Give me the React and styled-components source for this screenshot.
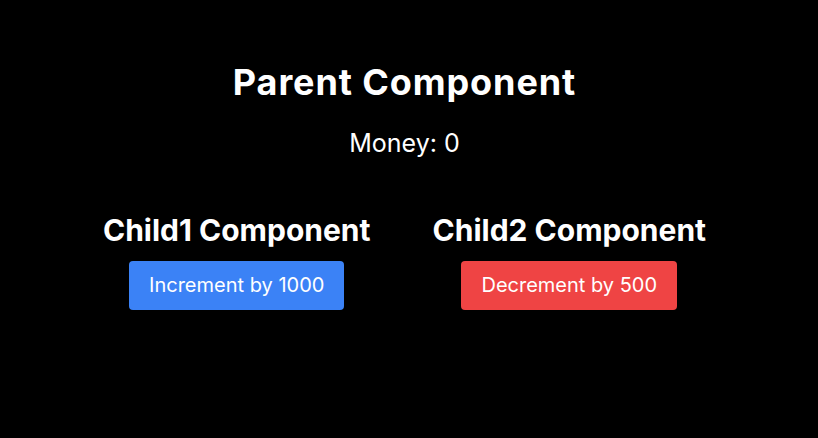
import styled, { createGlobalStyle } from "styled-components";

const GlobalStyle = createGlobalStyle`
  body {
    margin: 0;
    background: #000;
    color: #fff;
    font-family: Inter, "Noto Sans", sans-serif;
  }
`;

const Page = styled.div`
  min-height: 438px;
  padding: 60px 9px 0 0;
  display: flex;
  flex-direction: column;
  align-items: center;
  box-sizing: border-box;
`;

const Title = styled.h1`
  margin: 0;
  font-size: 36px;
  line-height: 44px;
  font-weight: 700;
  letter-spacing: 0.9px;
`;

const Money = styled.p`
  margin: 23px 0 0;
  font-size: 25px;
  line-height: 32px;
`;

const Children = styled.div`
  display: flex;
  gap: 62px;
  margin-top: 53px;
`;

const Child = styled.div`
  display: flex;
  flex-direction: column;
  align-items: center;
`;

const ChildTitle = styled.h2`
  margin: 0;
  font-size: 30px;
  line-height: 36px;
  font-weight: 700;
`;

const Button = styled.button`
  margin-top: 13px;
  border: none;
  border-radius: 4px;
  padding: 10px 20px;
  font-family: inherit;
  font-size: 20px;
  line-height: 29px;
  color: #fff;
  cursor: pointer;
  background: ${({ variant }) => (variant === "red" ? "#ef4444" : "#3b82f6")};
`;

export default function App() {
  return (
    <>
      <GlobalStyle />
      <Page>
        <Title>Parent Component</Title>
        <Money>Money: 0</Money>
        <Children>
          <Child>
            <ChildTitle>Child1 Component</ChildTitle>
            <Button variant="blue">Increment by 1000</Button>
          </Child>
          <Child>
            <ChildTitle>Child2 Component</ChildTitle>
            <Button variant="red">Decrement by 500</Button>
          </Child>
        </Children>
      </Page>
    </>
  );
}
